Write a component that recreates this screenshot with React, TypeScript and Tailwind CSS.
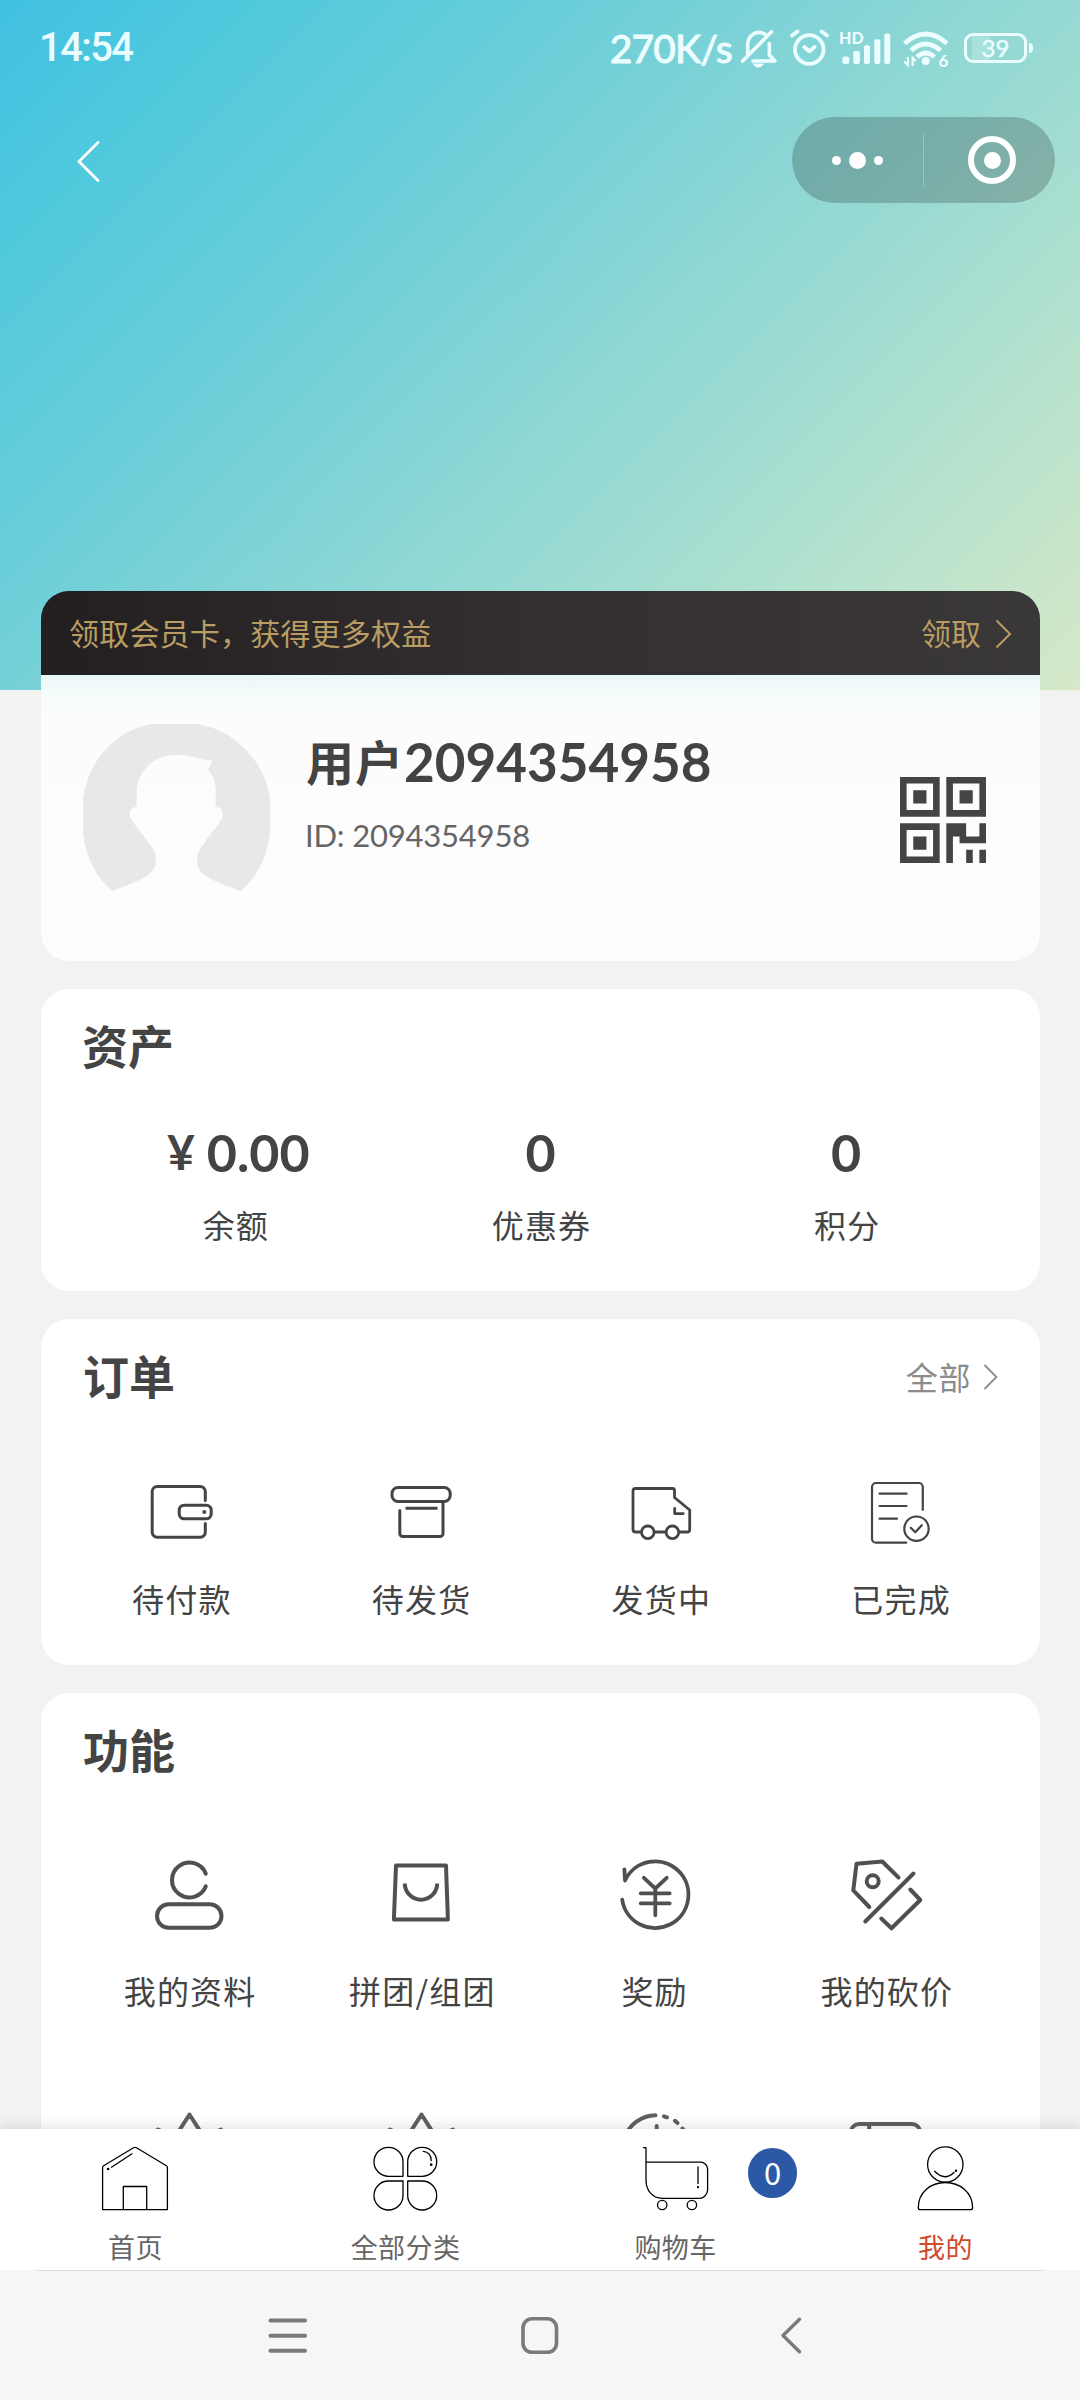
import type { ReactNode } from 'react';

interface IconItem {
  label: string;
  icon: ReactNode;
}

interface StrokeProps {
  size: number;
  width: number;
  children: ReactNode;
}

function Stroke({ size, width, children }: StrokeProps) {
  return (
    <svg
      width={size}
      height={size}
      viewBox={`0 0 ${size} ${size}`}
      fill="none"
      stroke="currentColor"
      strokeWidth={width}
      strokeLinecap="round"
      strokeLinejoin="round"
    >
      {children}
    </svg>
  );
}

const assets = [
  { label: '余额', value: '0.00', unit: '¥' },
  { label: '优惠券', value: '0' },
  { label: '积分', value: '0' },
];

const orders: IconItem[] = [
  {
    label: '待付款',
    icon: (
      <Stroke size={72} width={3}>
        <path d="M60.3 24.5V15.5a5 5 0 0 0-5-5H12.2a5 5 0 0 0-5 5V56.2a5 5 0 0 0 5 5H55.3a5 5 0 0 0 5-5V47.5" />
        <rect x="34.2" y="29.2" width="32" height="13.6" rx="5" />
        <circle cx="59.3" cy="36" r="2" fill="currentColor" stroke="none" />
      </Stroke>
    ),
  },
  {
    label: '待发货',
    icon: (
      <Stroke size={72} width={3}>
        <rect x="7" y="11.5" width="58.2" height="14" rx="6" />
        <path d="M14.8 34.5V57.5a3 3 0 0 0 3 3H55a3 3 0 0 0 3-3V27" />
        <path d="M20.5 32.3H52.5" strokeLinecap="butt" />
      </Stroke>
    ),
  },
  {
    label: '发货中',
    icon: (
      <Stroke size={72} width={2.8}>
        <path d="M17 56H11.5a2.5 2.5 0 0 1-2.5-2.5V15a2.5 2.5 0 0 1 2.5-2.5H48.5a2 2 0 0 1 2 2V21.5L65.7 34V53.5a2.5 2.5 0 0 1-2.5 2.5H55.5M30.5 56H41.5" />
        <circle cx="23.8" cy="56.3" r="6.3" />
        <circle cx="48.4" cy="56.3" r="6.3" />
        <path d="M50.7 32.3V37.6H59.2" />
      </Stroke>
    ),
  },
  {
    label: '已完成',
    icon: (
      <Stroke size={72} width={2.2}>
        <path d="M58.8 33.8V11a4 4 0 0 0-4-4H12a4 4 0 0 0-4 4V62.7a4 4 0 0 0 4 4H42.2" />
        <path d="M15.5 17.7H42.5M15.5 30H42.5M15.5 42.7H33" />
        <circle cx="52.5" cy="52.7" r="12.2" />
        <path d="M46.8 51.8L51.3 56.2L57.8 49.2" />
      </Stroke>
    ),
  },
];

const features: IconItem[] = [
  {
    label: '我的资料',
    icon: (
      <Stroke size={80} width={4}>
        <path d="M56.8 18.7A17.5 17.5 0 1 0 56.8 31.3" />
        <rect x="8" y="49.3" width="64.5" height="23.5" rx="11.7" />
      </Stroke>
    ),
  },
  {
    label: '拼团/组团',
    icon: (
      <Stroke size={80} width={4}>
        <path d="M15 10.5H65L66.9 64.5H12.9Z" />
        <path d="M23.8 28.5A16.2 16.2 0 0 0 56.2 28.5" strokeLinecap="butt" />
      </Stroke>
    ),
  },
  {
    label: '奖励',
    icon: (
      <Stroke size={80} width={3.8}>
        <g transform="translate(-1.3 0)">
          <path d="M9.5 44.7A33.3 33.3 0 1 0 12.3 25.5L11.7 14.5" />
          <path d="M31.2 22.8L42.6 33.5L54 22.8M42.6 34V60.3M28 38.3H57M28 48.3H57" />
        </g>
      </Stroke>
    ),
  },
  {
    label: '我的砍价',
    icon: (
      <Stroke size={80} width={4}>
        <path d="M52.5 22.5L36.3 6.5L10.5 8.7L7.3 35.3L23.3 52" />
        <circle cx="26.7" cy="26.3" r="6" />
        <path d="M67.5 18.5L19.3 66.5M64.3 34.5L74.3 45L45.5 73.3L35.3 63.5" />
      </Stroke>
    ),
  },
];

const star = (
  <Stroke size={80} width={4}>
    <path d="M28 26L40.5 6.5L53 26M9 21.5L18 26M72 21.5L63 26" />
  </Stroke>
);

// second feature row, mostly hidden behind the tab bar
const moreFeatures: ReactNode[] = [
  star,
  star,
  <Stroke size={80} width={4}>
    <path d="M10.5 30A33.5 33.5 0 0 1 41.5 7.2M50 8.3L53 9.3M61 12.8L63.5 15M68.5 20.5L70.5 23.5M42.7 18V30" />
  </Stroke>,
  <Stroke size={80} width={4}>
    <path d="M5 32V24a8 8 0 0 1 8-8H66a8 8 0 0 1 8 8V32M23.2 16V32" />
  </Stroke>,
];

const tabs = [
  {
    label: '首页',
    icon: (
      <Stroke size={72} width={1.3}>
        <path d="M3.6 67.7V25.5Q3.6 24.3 4.6 23.7L34.5 5.8Q36 5 37.5 5.8L67.4 23.7Q68.4 24.3 68.4 25.5V67.7Z" />
        <path d="M24.3 67V44.5H47.7V67" />
        <path d="M12.5 25.2L33 11.8" />
        <circle cx="9.1" cy="27" r="0.7" />
      </Stroke>
    ),
  },
  {
    label: '全部分类',
    icon: (
      <Stroke size={72} width={1.3}>
        <path d="M34 34.3H19.5A14.5 14.5 0 1 1 34 19.8Z" />
        <path d="M38.7 34.3H53.2A14.5 14.5 0 1 0 38.7 19.8Z" />
        <path d="M34 39H19.5A14.5 14.5 0 1 0 34 53.5Z" />
        <path d="M38.7 39H53.2A14.5 14.5 0 1 1 38.7 53.5Z" />
        <path d="M54.3 9.3Q62 10 62.2 18.7" />
        <circle cx="62.2" cy="22.7" r="0.7" />
      </Stroke>
    ),
  },
  {
    label: '购物车',
    badge: '0',
    icon: (
      <Stroke size={72} width={1.3}>
        <path d="M4.5 5.7H7V38C7 48 13 56.3 23.5 56.3H60A8.5 8.5 0 0 0 68.6 48V27A7 7 0 0 0 61.6 20.2H7" />
        <path d="M59 24.8V41.5" />
        <circle cx="59" cy="45.2" r="0.5" />
        <circle cx="23.2" cy="63" r="4.7" />
        <circle cx="52.9" cy="63" r="4.7" />
      </Stroke>
    ),
  },
  {
    label: '我的',
    active: true,
    icon: (
      <Stroke size={72} width={1.3}>
        <circle cx="36.3" cy="22.5" r="17.7" />
        <path d="M9.3 65.5C9.3 50 22 40.5 36.3 40.5S63.6 50 63.6 65.5Q63.6 67.7 61.5 67.7H11.5Q9.3 67.7 9.3 65.5Z" />
        <path d="M25.7 29.3Q35.5 39.5 45 30.5" />
        <circle cx="47" cy="28.7" r="0.6" />
      </Stroke>
    ),
  },
];

function StatusBar() {
  return (
    <div className="flex h-[96px] items-center justify-between pl-[39px] pr-[47px] text-[#ecfdff]">
      <span className="font-['Roboto',sans-serif] text-[40px] font-medium leading-none tracking-[-1.6px]">14:54</span>
      <div className="flex items-center">
        <span className="mr-[8px] font-['Lato',sans-serif] text-[39px] font-medium leading-none tracking-[-0.8px] [-webkit-text-stroke:0.8px_currentColor]">
          270K/s
        </span>
        <svg className="mr-[12px]" width="38" height="40" viewBox="0 0 38 40" fill="none" stroke="currentColor" strokeWidth="3.6" strokeLinecap="round" strokeLinejoin="round">
          <path d="M25 6.3C16 1 7.7 8 7.7 17V25.500M13 33H35L29.3 27V15.5M31.5 3.7L2.7 33" />
          <path d="M12.5 35.5H24Q22 39.5 18.3 39.5T12.5 35.5Z" fill="currentColor" stroke="none" />
        </svg>
        <svg className="mr-[11px]" width="39" height="40" viewBox="0 0 39 40" fill="none" stroke="currentColor" strokeWidth="3.8" strokeLinecap="round" strokeLinejoin="round">
          <circle cx="19.3" cy="21.5" r="14.3" />
          <path d="M2 7.5L7.5 3.5M37 7.5L31.5 3.5M14.3 19L19.3 23.2L24.5 19" />
        </svg>
        <svg className="mr-[12px]" width="51" height="40" viewBox="0 0 51 40" fill="currentColor">
          <text x="-1" y="15.5" fontFamily="Lato, sans-serif" fontSize="16" fontWeight="900">HD</text>
          <rect x="2.3" y="28.5" width="7" height="7.5" rx="2.5" />
          <rect x="13.3" y="23" width="6.6" height="13" rx="2" />
          <rect x="24" y="17.3" width="6" height="18.7" rx="2" />
          <rect x="34.3" y="11.3" width="6" height="24.7" rx="2" />
          <rect x="44.3" y="5.5" width="6" height="30.5" rx="2" />
        </svg>
        <svg className="mr-[11px]" width="50" height="44" viewBox="0 -2 50 44" fill="none" stroke="currentColor" strokeWidth="4.6">
          <path d="M1.5 15.5Q22.7-3.5 44 15.5M8 22.500Q22.7 9.5 37.5 22.5M14 29Q22.7 21 31.5 29" />
          <circle cx="22.7" cy="33" r="4" fill="currentColor" stroke="none" />
          <path d="M5 29V37L1.2 33.5M9.7 38V30L13 33" strokeWidth="2.2" />
          <text x="35.5" y="38.5" fill="currentColor" stroke="none" fontFamily="Lato, sans-serif" fontSize="17" fontWeight="900">6</text>
        </svg>
        <div className="flex h-[30px] w-[63px] items-center justify-center rounded-[9px] border-[3px] border-current bg-[linear-gradient(90deg,transparent_5px,#ffffff38_5px,#ffffff38_23px,transparent_23px)] font-['Lato',sans-serif] text-[24px] leading-none [-webkit-text-stroke:0.5px_currentColor]">
          39
        </div>
        <div className="ml-[2px] h-[10px] w-[4px] rounded-r-full bg-current" />
      </div>
    </div>
  );
}

function TitleBar() {
  return (
    <div className="mt-[21px] flex h-[86px] items-center justify-between pl-[75px] pr-[25px] text-white">
      <svg width="26" height="44" viewBox="0 0 26 44" fill="none" stroke="currentColor" strokeWidth="2.8" strokeLinecap="round" strokeLinejoin="round">
        <path d="M23 4.5L4 23.5L23 42.5" />
      </svg>
      <div className="flex h-[86px] w-[263px] items-center rounded-full bg-black/20">
        <div className="flex w-[131px] items-center justify-center gap-[8px]">
          <span className="h-[9px] w-[9px] rounded-full bg-white" />
          <span className="h-[17px] w-[17px] rounded-full bg-white" />
          <span className="h-[9px] w-[9px] rounded-full bg-white" />
        </div>
        <div className="h-[52px] w-px bg-white/25" />
        <div className="flex flex-1 items-center justify-center pl-[5px]">
          <div className="flex h-[48px] w-[48px] items-center justify-center rounded-full border-[6.5px] border-white">
            <span className="h-[17px] w-[17px] rounded-full bg-white" />
          </div>
        </div>
      </div>
    </div>
  );
}

function MemberCard() {
  return (
    <section className="h-[370px] shrink-0 overflow-hidden rounded-[28px]">
      <div className="flex h-[84px] items-center justify-between bg-gradient-to-r from-[#231f20] via-[#343031] to-[#3a3738] pl-[28px] pr-[28px] text-[30px] leading-none text-[#b99d62]">
        <span className="pb-[3px] tracking-[0.2px]">领取会员卡，获得更多权益</span>
        <div className="flex items-center gap-[13px]">
          <span className="pb-[3px]">领取</span>
          <svg className="mt-[2px]" width="18" height="30" viewBox="0 0 18 30" fill="none" stroke="currentColor" strokeWidth="2">
            <path d="M2.5 1.5L16 15L2.5 28.5" />
          </svg>
        </div>
      </div>
      <div className="flex h-[286px] bg-[linear-gradient(180deg,#e9f7f7_0px,#f5fbfb_18px,#fcfcfc_45px,#fdfdfd_100%)] pl-[42px] pt-[49px]">
        <svg width="188" height="188" viewBox="0 0 188 188">
          <path
            fill="#e8e8e8"
            d="M70 0H113C157 6 184 44 187 76V109C184 134 174 153 157.3 167.3C145 161 115 155 114.3 139V130C117 124 121 120 126 112C131 105 137 100 139.5 92C140 86 137 83 132.7 83V66C132 56 130 52 125 46L129.3 36.5C118 36 107 30.7 93.3 30.7C71 31 55 47 53.7 66V83C49 83 46 86 47 92C50 100 56 105 60.5 112C66 119 70 124 72.7 130V139C71 155 42 161 29.3 167.3C13 153 3 134 0 109V76C3 44 28 6 70 0Z"
          />
        </svg>
        <div className="ml-[35px] flex flex-1 flex-col">
          <div className="mt-[5px] flex h-[64px] items-center font-bold leading-none text-[#444343]">
            <span className="pb-[2px] text-[48px] tracking-[1px]">用户</span>
            <span className="font-['Lato',sans-serif] text-[53px]">2094354958</span>
          </div>
          <div className="mt-[19px] -ml-px font-['Lato',sans-serif] text-[31px] leading-[46px] tracking-[-0.2px] text-[#656565]">
            ID: 2094354958
          </div>
        </div>
        <svg className="mr-[54px] mt-[53px]" width="86" height="86" viewBox="0 0 13 13" fill="#444">
          <path fillRule="evenodd" d="M0 0H6V6H0ZM1 1V5H5V1ZM7 0H13V6H7ZM8 1V5H12V1ZM0 7H6V13H0ZM1 8V12H5V8Z" />
          <path d="M2 2H4V4H2ZM9 2H11V4H9ZM2 9H4V11H2ZM7 7H10V9H12V7H13V10H9V9H8V13H7ZM10 11H11V13H10ZM12 11H13V13H12Z" />
        </svg>
      </div>
    </section>
  );
}

function SectionTitle({ children }: { children: ReactNode }) {
  return <h2 className="text-[46px] font-bold leading-none text-[#444]">{children}</h2>;
}

function ItemLabel({ children }: { children: ReactNode }) {
  return <span className="pl-[2px] text-[32px] leading-[48px] tracking-[1.2px]">{children}</span>;
}

function TabBar() {
  return (
    <nav className="relative h-[141px] shrink-0 bg-white shadow-[0_-2px_14px_rgba(0,0,0,0.12)]">
      <div className="grid h-full grid-cols-4">
        {tabs.map((tab) => (
          <div key={tab.label} className="relative flex flex-col items-center pt-[13px] text-black">
            {tab.icon}
            <span
              className={
                tab.active
                  ? 'mt-[13px] pl-px text-[27px] leading-[40px] tracking-[0.4px] text-[#d04a2c]'
                  : 'mt-[13px] pl-px text-[27px] leading-[40px] tracking-[0.4px] text-[#666]'
              }
            >
              {tab.label}
            </span>
            {tab.badge && (
              <span className="absolute left-[208px] top-[19px] flex h-[50px] w-[49px] items-center justify-center rounded-full bg-[#2c59a5] pb-[3px] text-[31px] leading-none text-white">
                {tab.badge}
              </span>
            )}
          </div>
        ))}
      </div>
    </nav>
  );
}

function SystemNav() {
  return (
    <div className="relative z-10 flex h-[130px] shrink-0 flex-col bg-[#f6f6f6] text-[#7a7a7a]">
      <div className="mx-[37px] h-px bg-[#dcdcdc]" />
      <div className="mx-auto grid w-[756px] flex-1 grid-cols-3 items-center justify-items-center">
        <Stroke size={44} width={4}>
          <path d="M4.5 6.5H39M4.5 21.7H39M4.5 36.7H39" />
        </Stroke>
        <Stroke size={44} width={3.6}>
          <rect x="5" y="4.8" width="33.5" height="33.5" rx="9" />
        </Stroke>
        <Stroke size={44} width={3.4}>
          <path d="M29.5 5.3L13 21.5L29.5 37.7" />
        </Stroke>
      </div>
    </div>
  );
}

export default function App() {
  return (
    <div className="flex h-[2400px] w-[1080px] flex-col overflow-hidden bg-[#f2f2f0] font-['Noto_Sans_CJK_SC',sans-serif] text-[#444]">
      <header className="h-[690px] shrink-0 bg-[linear-gradient(135deg,#40c0e2_0%,#50c9dd_14%,#66cdd9_30%,#80d3d6_46%,#98dad3_62%,#bae3cd_83%,#d6e8c7_100%)]">
        <StatusBar />
        <TitleBar />
      </header>

      <main className="mx-[41px] -mt-[99px] flex h-[1538px] w-[999px] shrink-0 flex-col gap-[28px]">
        <MemberCard />

        <section className="h-[302px] shrink-0 rounded-[28px] bg-white px-[41px] pt-[32px]">
          <SectionTitle>资产</SectionTitle>
          <div className="mt-[55px] grid grid-cols-3 text-center">
            {assets.map((a) => (
              <div key={a.label} className="flex flex-col">
                <div className="flex items-center justify-center font-['Lato',sans-serif] text-[52px] font-bold leading-[60px]">
                  {a.unit && <span className="ml-[7px] mr-[12px] text-[48px]">{a.unit}</span>}
                  <span>{a.value}</span>
                </div>
                <span className="mt-[18px] pl-[2px] text-[32px] leading-[48px] tracking-[1.2px]">{a.label}</span>
              </div>
            ))}
          </div>
        </section>

        <section className="h-[346px] shrink-0 rounded-[28px] bg-white px-[20px] pt-[32px]">
          <div className="flex items-center justify-between pl-[22px] pr-[20px]">
            <SectionTitle>订单</SectionTitle>
            <div className="flex items-center gap-[11px] pt-[3px] text-[32px] leading-none text-[#8c8c8c]">
              <span className="tracking-[0.6px]">全部</span>
              <svg className="mt-[3px]" width="18" height="28" viewBox="0 0 18 28" fill="none" stroke="currentColor" strokeWidth="1.8">
                <path d="M2.5 2L14.5 14L2.5 26" />
              </svg>
            </div>
          </div>
          <div className="mt-[79px] grid grid-cols-4">
            {orders.map((o) => (
              <div key={o.label} className="flex flex-col items-center gap-[26px]">
                {o.icon}
                <ItemLabel>{o.label}</ItemLabel>
              </div>
            ))}
          </div>
        </section>

        <section className="min-h-0 flex-1 overflow-hidden rounded-t-[28px] bg-white px-[32px] pt-[32px]">
          <div className="pl-[10px]">
            <SectionTitle>功能</SectionTitle>
          </div>
          <div className="mt-[84px] grid w-[929px] grid-cols-4">
            {features.map((f) => (
              <div key={f.label} className="flex flex-col items-center gap-[31px]">
                <span className="text-[#505050]">{f.icon}</span>
                <ItemLabel>{f.label}</ItemLabel>
              </div>
            ))}
          </div>
          <div className="mt-[94px] grid w-[929px] grid-cols-4 justify-items-center text-[#606060]">
            {moreFeatures.map((icon, i) => (
              <span key={i}>{icon}</span>
            ))}
          </div>
        </section>
      </main>

      <TabBar />
      <SystemNav />
    </div>
  );
}
